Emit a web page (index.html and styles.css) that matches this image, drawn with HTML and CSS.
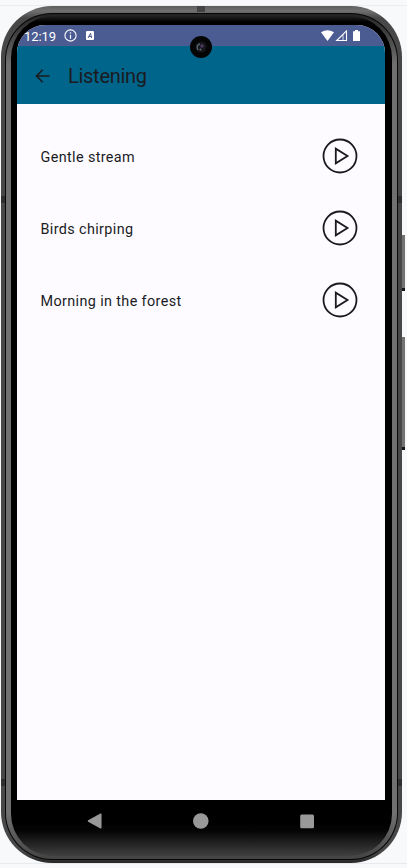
FILE: index.html
```html
<!DOCTYPE html>
<html lang="en">
<head>
<meta charset="utf-8">
<title>Listening</title>
<link rel="stylesheet" href="styles.css">
</head>
<body>
<div class="stage">
  <i class="key power"></i><i class="key volume"></i>
  <div class="phone">
    <div class="groove"><div class="rim"><div class="bezel">
      <main class="screen">
        <header class="status">
          <span class="time">12:19</span>
          <svg class="info" width="13" height="13" viewBox="0 0 13 13"><circle cx="6.5" cy="6.5" r="5.6" fill="none" stroke="#fff" stroke-width="1.1"/><path d="M6.5 5.7v4M6.5 3.2v1.3" stroke="#fff" stroke-width="1.2"/></svg>
          <svg class="app" width="8" height="9" viewBox="0 0 8 9"><rect width="8" height="9" rx="1" fill="#fff"/><path d="M2 7l2.500-4.800L5.700 7M2.800 5.500h2.500" fill="none" stroke="#4b5c92" stroke-width="1"/></svg>
          <svg class="signals" width="40" height="12" viewBox="0 0 40 12"><path d="M0 2.300Q6.500-1.700 13 2.300L6.500 11z" fill="#fff"/><path d="M15.700 10.500h9.800V.9z" fill="none" stroke="#fff" stroke-width="1.100"/><path d="M22 4.500v6" stroke="#fff" stroke-width=".8"/><path d="M32 1.200h2V0h3v1.200h2V11h-7z" fill="#fff"/></svg>
        </header>
        <div class="toolbar">
          <svg width="15" height="14" viewBox="0 0 15 14"><path d="M14.500 7H1.500M7.700.7L1.500 7l6.200 6.300" fill="none" stroke="#1b1b1f" stroke-width="1.6"/></svg>
          <h1>Listening</h1>
        </div>
        <ul class="sounds">
          <li><span>Gentle stream</span><svg width="36" height="36" viewBox="0 0 36 36"><circle cx="18" cy="18" r="16.500"/><path d="M13.800 10.700v14.600L25.500 18z"/></svg></li>
          <li><span>Birds chirping</span><svg width="36" height="36" viewBox="0 0 36 36"><circle cx="18" cy="18" r="16.500"/><path d="M13.800 10.700v14.600L25.500 18z"/></svg></li>
          <li><span>Morning in the forest</span><svg width="36" height="36" viewBox="0 0 36 36"><circle cx="18" cy="18" r="16.500"/><path d="M13.800 10.700v14.600L25.500 18z"/></svg></li>
        </ul>
        <nav class="nav">
          <svg width="16" height="16" viewBox="0 0 16 16"><path d="M1.500 8L13.800 1.200v13.600z" fill="#999" stroke="#999" stroke-width="1.5" stroke-linejoin="round"/></svg>
          <svg width="16" height="16" viewBox="0 0 16 16"><circle cx="7.800" cy="8" r="7.800" fill="#999"/></svg>
          <svg width="16" height="16" viewBox="0 0 16 16"><rect x="1.200" y="1.400" width="13.800" height="13.800" rx="1.500" fill="#999"/></svg>
        </nav>
      </main>
    </div></div></div>
    <i class="seam top"></i><i class="seam l1"></i><i class="seam l2"></i><i class="seam r1"></i><i class="seam r2"></i>
    <svg class="camera" width="22" height="22" viewBox="0 0 22 22"><circle cx="11" cy="11" r="11" fill="#050505"/><circle cx="11" cy="11" r="5.500" fill="#15151b"/><path d="M8 14Q5.500 9.500 10 8" fill="none" stroke="#53666b" stroke-width="1.4"/><circle cx="12" cy="10" r="1.700" fill="#4c3c65"/><circle cx="10.500" cy="13.500" r="1" fill="#62716e"/></svg>
  </div>
</div>
</body>
</html>
```
FILE: styles.css
```css
* { box-sizing: border-box; }
body { margin: 0; font-family: Roboto, sans-serif; background: #f8f9fb; color: #1b1b1f; }
.stage { position: relative; height: 868px; padding: 6px 5px 5px 1px; overflow: hidden; background: linear-gradient(#ecedef, #ecedef) 0 5px / 100% 1px no-repeat, linear-gradient(#e8eaee, #e8eaee) 0 863px / 100% 1px no-repeat, #f8f9fb; }
.phone { position: relative; height: 857px; border-radius: 51px; padding: 7px 4px 3px; background: linear-gradient(#5c5e5c, #707070 5px, #484848 12px, #484848 845px, #282828); }
.groove { height: 100%; border-radius: 47px; padding: 1px; background: #080808; }
.rim { height: 100%; border-radius: 46px; padding: 2px 5px 3px; background: linear-gradient(#222, #707070 50px, #707070 800px, #444 845px); }
.bezel { height: 100%; border-radius: 42px; padding: 9px 7px 48px 6px; background: linear-gradient(#222, #000 6px, #000 96%, #050505 97%, #404040); }
.screen { height: 775px; border-radius: 28px 28px 0 0; overflow: hidden; background: #fdfbff; }
.status { display: flex; align-items: center; height: 21px; padding: 0 24px 0 7px; background: #4b5c92; color: #fff; }
.time { width: 33px; font-size: 13px; line-height: 21px; letter-spacing: -.1px; padding-top: 1px; }
.info { margin-left: 7px; }
.app { margin-left: 9px; }
.signals { margin-left: auto; }
.toolbar { display: flex; align-items: center; height: 58px; padding-left: 18px; gap: 18px; background: #00658a; }
h1 { margin: 1px 0 0; font-size: 20px; line-height: 28px; font-weight: 400; letter-spacing: -.28px; }
.toolbar svg { margin-top: 1px; }
.sounds { list-style: none; margin: 0; padding: 16px 27px 0 23.5px; }
.sounds li { display: flex; align-items: center; justify-content: space-between; height: 72px; font-size: 14.4px; letter-spacing: .37px; }
.sounds span { padding-top: 2px; }
.sounds svg { fill: none; stroke: #1b1b1f; stroke-width: 1.8; }
.nav { position: absolute; left: 86px; right: 87px; top: 807px; display: flex; justify-content: space-between; }
.camera { position: absolute; left: 189px; top: 30px; }
.key { position: absolute; left: 402px; width: 3px; background: #737373; border-bottom: 3px solid #151515; }
.power { top: 235px; height: 56px; }
.volume { top: 337px; height: 113px; }
.seam { position: absolute; width: 4px; height: 7px; background: #303030; }
.seam.top { left: 196px; top: 0; width: 8px; height: 6px; background: #444; }
.l1, .r1 { top: 190px; }
.l2, .r2 { top: 773px; }
.l1, .l2 { left: 0; }
.r1, .r2 { right: 0; }
```
